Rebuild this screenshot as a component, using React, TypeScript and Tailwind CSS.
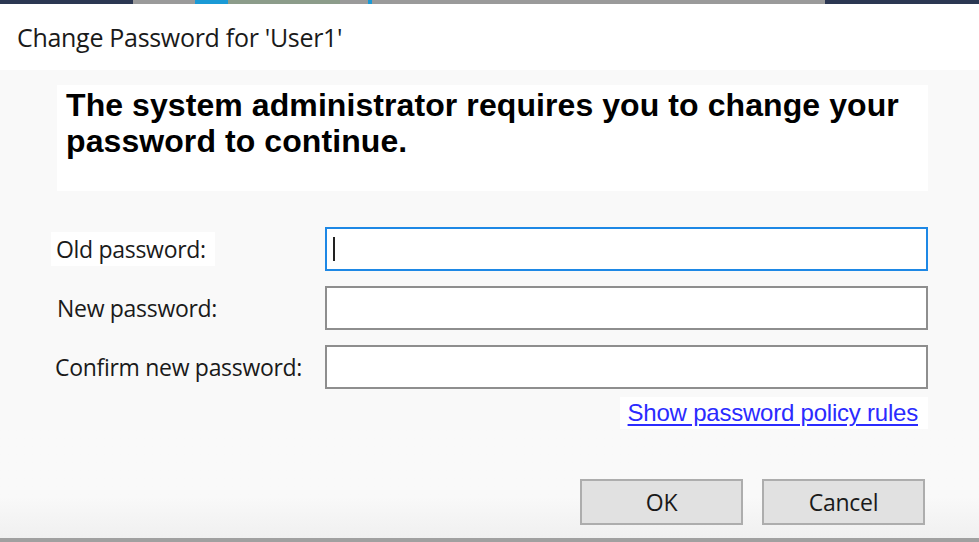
export default function App() {
  const label = "text-[23px] leading-[30px] text-[#1a1a1a] tracking-[-0.3px]";
  const box = "h-[44px] w-[603px] bg-white border-2";

  return (
    <div
      className="w-[979px] h-[542px] flex flex-col overflow-hidden bg-[#f9f9f9]"
      style={{ fontFamily: '"Open Sans", "Noto Sans", sans-serif' }}
    >
      {/* taskbar remnants behind the dialog */}
      <div className="h-[4px] flex">
        <div className="w-[133px] bg-[#2b3752]" />
        <div className="w-[62px] bg-[#9a9a9a]" />
        <div className="w-[33px] bg-[#1a9ad6]" />
        <div className="w-[112px] bg-[#8c9c8a]" />
        <div className="w-[28px] bg-[#9a9a9a]" />
        <div className="w-[4px] bg-[#1a9ad6]" />
        <div className="w-[453px] bg-[#9a9a9a]" />
        <div className="flex-1 bg-[#2b3752]" />
      </div>

      <div className="h-[66px] bg-white flex items-start pl-[17px] pt-[19px]">
        <span className="text-[25px] leading-[28px] text-[#1a1a1a] tracking-[-0.3px]">
          Change Password for 'User1'
        </span>
      </div>

      <div className="flex-1 flex flex-col">
        <div className="mt-[15px] ml-[57px] w-[871px] h-[106px] bg-white pl-[9px] pt-[2px]">
          <p
            className="font-bold text-[32px] leading-[36px] text-black tracking-[0.08px]"
            style={{ fontFamily: '"Liberation Sans", Arial, sans-serif' }}
          >
            The system administrator requires you to change your
            <br />
            password to continue.
          </p>
        </div>

        <div className="mt-[36px] flex flex-col gap-[15px]">
          <div className="flex items-center">
            <div className="w-[325px] pl-[51px]">
              <span className={`${label} bg-white pl-[5px] pr-[9px] py-[1px]`}>Old password:</span>
            </div>
            <div className={`${box} border-[#1e88e5] flex items-center pl-[6px]`}>
              <div className="w-[2px] h-[24px] bg-[#222]" />
            </div>
          </div>
          <div className="flex items-center">
            <div className="w-[325px] pl-[57px]">
              <span className={label}>New password:</span>
            </div>
            <div className={`${box} border-[#8e8e8e]`} />
          </div>
          <div className="flex items-center">
            <div className="w-[325px] pl-[55px]">
              <span className={label}>Confirm new password:</span>
            </div>
            <div className={`${box} border-[#8e8e8e]`} />
          </div>
        </div>

        <div className="mt-[8px] flex justify-end pr-[51px]">
          <a
            href="#"
            className="bg-white pl-[8px] pr-[10px] py-[1px] text-[24px] leading-[30px] text-[#2b2bff] underline underline-offset-[3px] tracking-[-0.22px]"
            style={{ fontFamily: '"Liberation Sans", Arial, sans-serif' }}
          >
            Show password policy rules
          </a>
        </div>

        <div className="flex-1 flex flex-col justify-end bg-gradient-to-b from-[#f9f9f9] from-60% to-[#efefef]">
          <div className="flex justify-end gap-[19px] pr-[54px] pb-[13px]">
            <button className="w-[163px] h-[46px] bg-[#e1e1e1] border-2 border-[#adadad] text-[23px] tracking-[-0.3px] text-[#1a1a1a]">
              OK
            </button>
            <button className="w-[163px] h-[46px] bg-[#e1e1e1] border-2 border-[#adadad] text-[23px] tracking-[-0.3px] text-[#1a1a1a]">
              Cancel
            </button>
          </div>
          <div className="h-[4px] bg-[#a0a0a0]" />
        </div>
      </div>
    </div>
  );
}
